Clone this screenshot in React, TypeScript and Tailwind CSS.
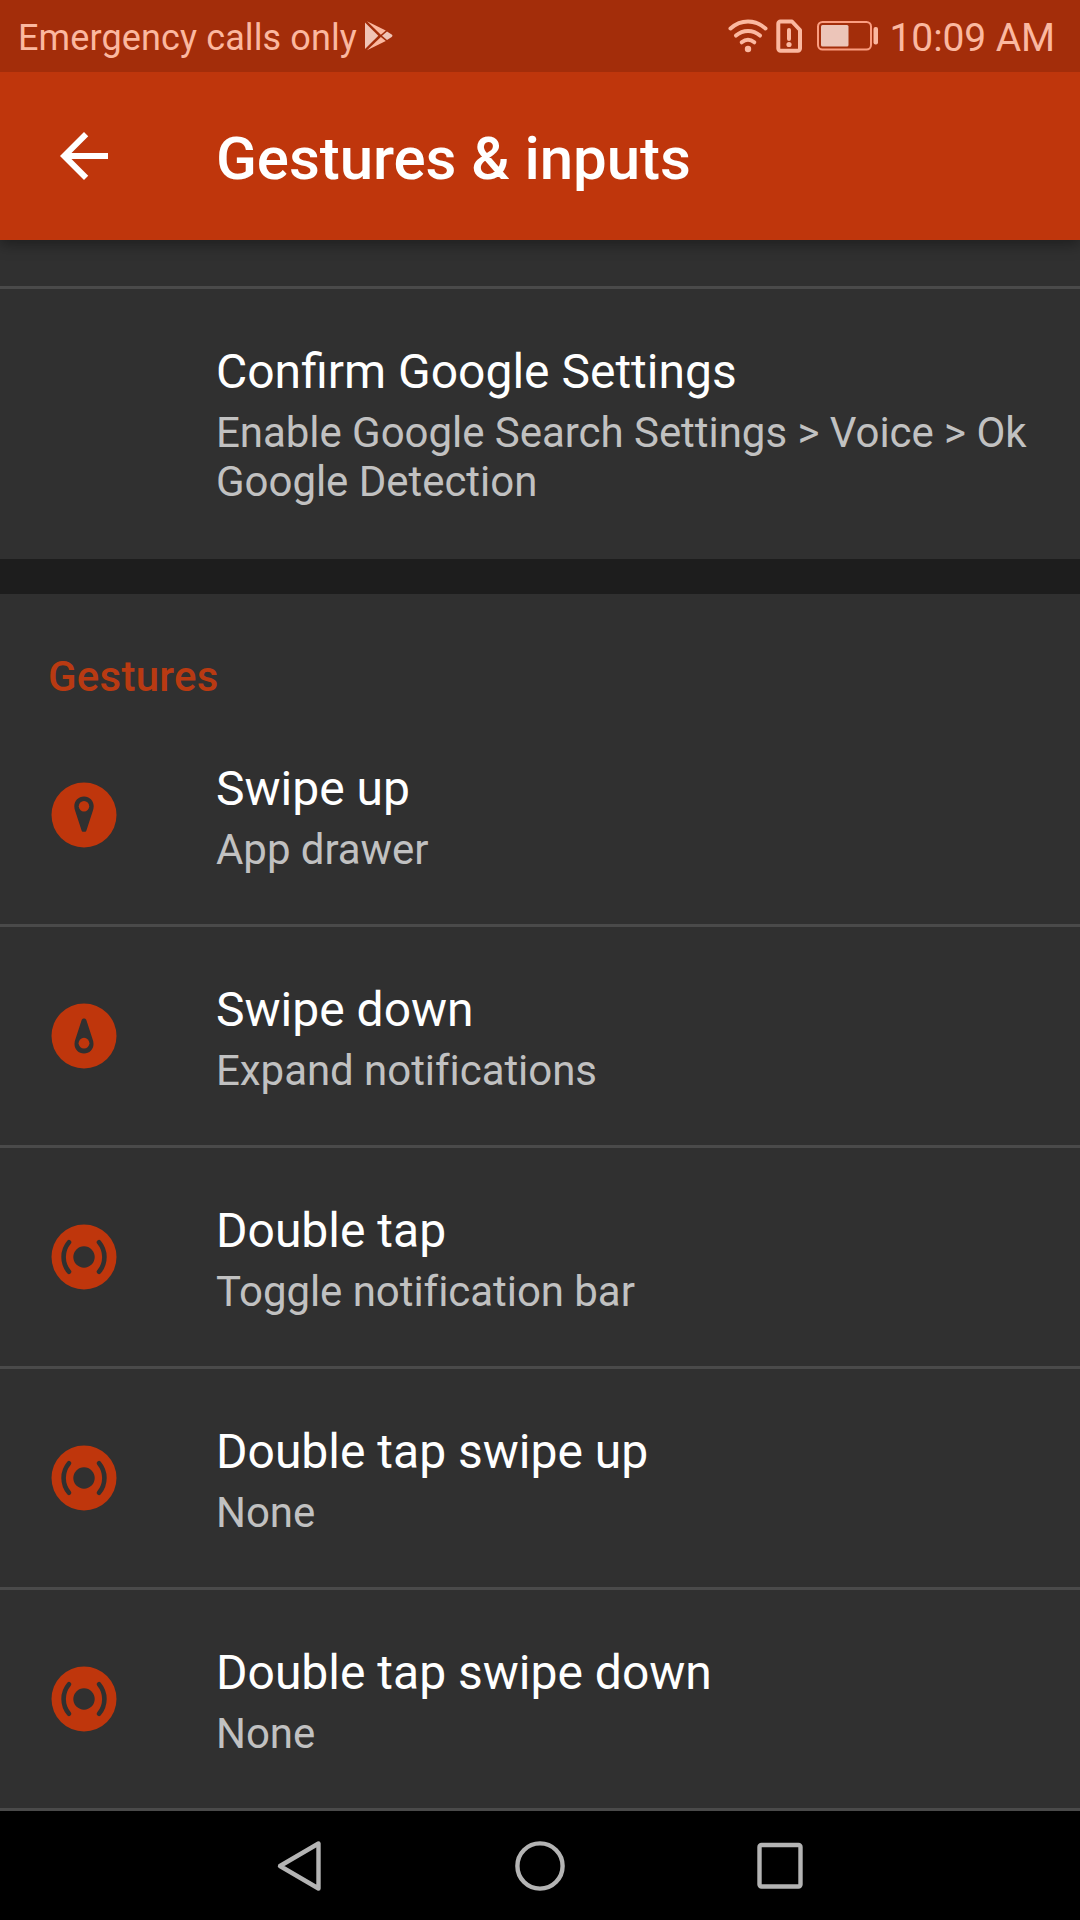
import type { ReactNode } from 'react'

function SwipeUpIcon() {
  return (
    <svg className="w-[66px] h-[66px]" viewBox="0 0 66 66">
      <circle cx="33" cy="33" r="32.5" fill="#bf360c" />
      <path d="M33 14.5c-5.600 0-9.700 4.300-9.700 9.800 0 1.800.4 3.400 1 4.900l6.200 19c.4 1.200.8 1.500 1.700 1.500h1.600c.9 0 1.300-.3 1.700-1.500l6.200-19c.6-1.500 1-3.100 1-4.900 0-5.500-4.100-9.800-9.700-9.800z" fill="#303030" />
      <circle cx="33" cy="24.2" r="5.2" fill="#bf360c" />
    </svg>
  )
}

function SwipeDownIcon() {
  return (
    <svg className="w-[66px] h-[66px] rotate-180" viewBox="0 0 66 66">
      <circle cx="33" cy="33" r="32.5" fill="#bf360c" />
      <path d="M33 15.5c-5.500 0-9.500 4.200-9.500 9.500 0 1.800.4 3.400 1 4.900l6 18.600c.5 1.500 1.200 2 2.500 2s2-.5 2.500-2l6-18.600c.6-1.500 1-3.100 1-4.900 0-5.300-4-9.500-9.500-9.500z" fill="#303030" />
      <circle cx="33" cy="25.8" r="5.4" fill="#bf360c" />
    </svg>
  )
}

function DoubleTapIcon() {
  return (
    <svg className="w-[66px] h-[66px]" viewBox="0 0 66 66">
      <circle cx="33" cy="33" r="32.5" fill="#bf360c" />
      <circle cx="33" cy="33" r="10.7" fill="#303030" />
      <g fill="none" stroke="#303030" strokeWidth="4.6" strokeLinecap="round">
        <path d="M18 18.200c-7.200 8.500-7.200 21.100 0 29.600" />
        <path d="M48 18.200c7.200 8.500 7.200 21.100 0 29.600" />
      </g>
    </svg>
  )
}

const gestures: { title: string; summary: string; icon: ReactNode }[] = [
  { title: 'Swipe up', summary: 'App drawer', icon: <SwipeUpIcon /> },
  { title: 'Swipe down', summary: 'Expand notifications', icon: <SwipeDownIcon /> },
  { title: 'Double tap', summary: 'Toggle notification bar', icon: <DoubleTapIcon /> },
  { title: 'Double tap swipe up', summary: 'None', icon: <DoubleTapIcon /> },
  { title: 'Double tap swipe down', summary: 'None', icon: <DoubleTapIcon /> },
]

function StatusBar() {
  return (
    <div className="relative z-10 h-[72px] shrink-0 bg-[#a32d0a] flex items-center justify-between pl-[18px] pr-[25px] text-[#fbb8a0]">
      <div className="flex items-center">
        <span className="text-[36px] leading-[42px] pt-[4px] tracking-[0.12px]">Emergency calls only</span>
        <svg className="w-[28px] h-[30px] ml-[8px]" viewBox="0 0 28 30">
          <path d="M0 1.500v26.500l13.300-13.300z" fill="#f0c4b6" />
          <path d="M2 .2l18.800 9.300-4.900 4.200z" fill="#fbb8a0" />
          <path d="M2 29.300l13.900-13.300 4.900 3.900z" fill="#fbb8a0" />
          <path d="M17 14.800l5-4.300 4.700 3.100c1 .7 1 1.700 0 2.400l-4.700 3z" fill="#f0c4b6" />
        </svg>
      </div>
      <div className="flex items-center">
        <svg className="w-[40px] h-[34px]" viewBox="0 0 40 34" fill="none" stroke="#fbb8a0" strokeWidth="4" strokeLinecap="round">
          <path d="M2.500 9.500c10.500-9.300 24.500-9.300 35 0" />
          <path d="M8 16.600c7-6.200 17-6.200 24 0" />
          <path d="M13.700 23.300c4-3.300 8.600-3.300 12.600 0" />
          <circle cx="20" cy="30" r="3.200" fill="#fbb8a0" stroke="none" />
        </svg>
        <svg className="w-[26px] h-[34px] ml-[8px]" viewBox="0 0 26 34" fill="none" stroke="#fbb8a0" strokeWidth="4">
          <path d="M4.500 2.500h11.500l8 8.500v18.500a2.200 2.200 0 0 1-2.200 2.200h-17.300a2.200 2.200 0 0 1-2.200-2.200v-24.800a2.200 2.200 0 0 1 2.200-2.200z" strokeLinejoin="round" />
          <path d="M13 11v9" strokeLinecap="round" />
          <circle cx="13" cy="25.500" r="2.600" fill="#fbb8a0" stroke="none" />
        </svg>
        <svg className="w-[62px] h-[30px] ml-[15px]" viewBox="0 0 62 30">
          <rect x="1" y="1" width="53" height="27.5" rx="4.500" fill="none" stroke="#fb9d80" strokeWidth="2" />
          <rect x="4" y="4" width="27.5" height="21.5" rx="1.500" fill="#ecc5b9" />
          <rect x="56.5" y="6" width="4.5" height="17.5" rx="2" fill="#fbb8a0" />
        </svg>
        <span className="text-[39px] leading-[42px] ml-[11px] pt-[3px] tracking-[-0.1px]">10:09 AM</span>
      </div>
    </div>
  )
}

export default function App() {
  return (
    <div className="w-[1080px] h-[1920px] overflow-hidden flex flex-col bg-[#303030] font-['Roboto',sans-serif]">
      <StatusBar />

      <header className="h-[168px] shrink-0 bg-[#bf360c] flex items-center pl-[48px] shadow-[0_4px_14px_rgba(0,0,0,0.4)]">
        <svg className="w-[72px] h-[72px]" viewBox="0 0 24 24" fill="#fff">
          <path d="M20 11H7.830l5.590-5.590L12 4l-8 8 8 8 1.410-1.410L7.830 13H20v-2z" />
        </svg>
        <h1 className="ml-[96px] pt-[5px] text-[60px] leading-[70px] font-medium tracking-[-0.06px] text-white">
          Gestures &amp; inputs
        </h1>
      </header>

      <div className="h-[49px] shrink-0 border-b-[3px] border-[#4a4a4a]" />

      <div className="h-[270px] shrink-0 pl-[216px] pr-[48px] pt-[55px]">
        <div className="text-[48px] leading-[56px] text-white">Confirm Google Settings</div>
        <div className="mt-[8px] text-[42px] leading-[49px] tracking-[-0.04px] text-[#c1c1c1]">
          Enable Google Search Settings &gt; Voice &gt; Ok Google Detection
        </div>
      </div>

      <div className="h-[35px] shrink-0 bg-[#1d1d1d]" />

      <h2 className="h-[112px] shrink-0 pl-[48px] pt-[58px] text-[42px] leading-[49px] font-medium tracking-[0.25px] text-[#b93a12]">
        Gestures
      </h2>

      {gestures.map((gesture) => (
        <div
          key={gesture.title}
          className="h-[221px] shrink-0 flex items-start pl-[51px] border-b-[3px] border-[#4a4a4a]"
        >
          <div className="pt-[76px] w-[165px]">{gesture.icon}</div>
          <div className="pt-[55px]">
            <div className="text-[48px] leading-[56px] text-white">{gesture.title}</div>
            <div className="mt-[8px] text-[42px] leading-[49px] tracking-[-0.05px] text-[#c1c1c1]">
              {gesture.summary}
            </div>
          </div>
        </div>
      ))}

      <nav className="flex-1 bg-black flex items-center justify-center gap-[190px]">
        <svg className="w-[50px] h-[54px]" viewBox="0 0 50 54" fill="none" stroke="#b4b4b4" strokeWidth="4.4" strokeLinejoin="round">
          <path d="M43.500 4.500v45L5 27z" />
        </svg>
        <svg className="w-[50px] h-[54px]" viewBox="0 0 50 54" fill="none" stroke="#b4b4b4" strokeWidth="4.4">
          <circle cx="25" cy="27" r="22.600" />
        </svg>
        <svg className="w-[50px] h-[54px]" viewBox="0 0 50 54" fill="none" stroke="#b4b4b4" strokeWidth="4.4">
          <rect x="4.500" y="6" width="41" height="41.500" rx="2" />
        </svg>
      </nav>
    </div>
  )
}
